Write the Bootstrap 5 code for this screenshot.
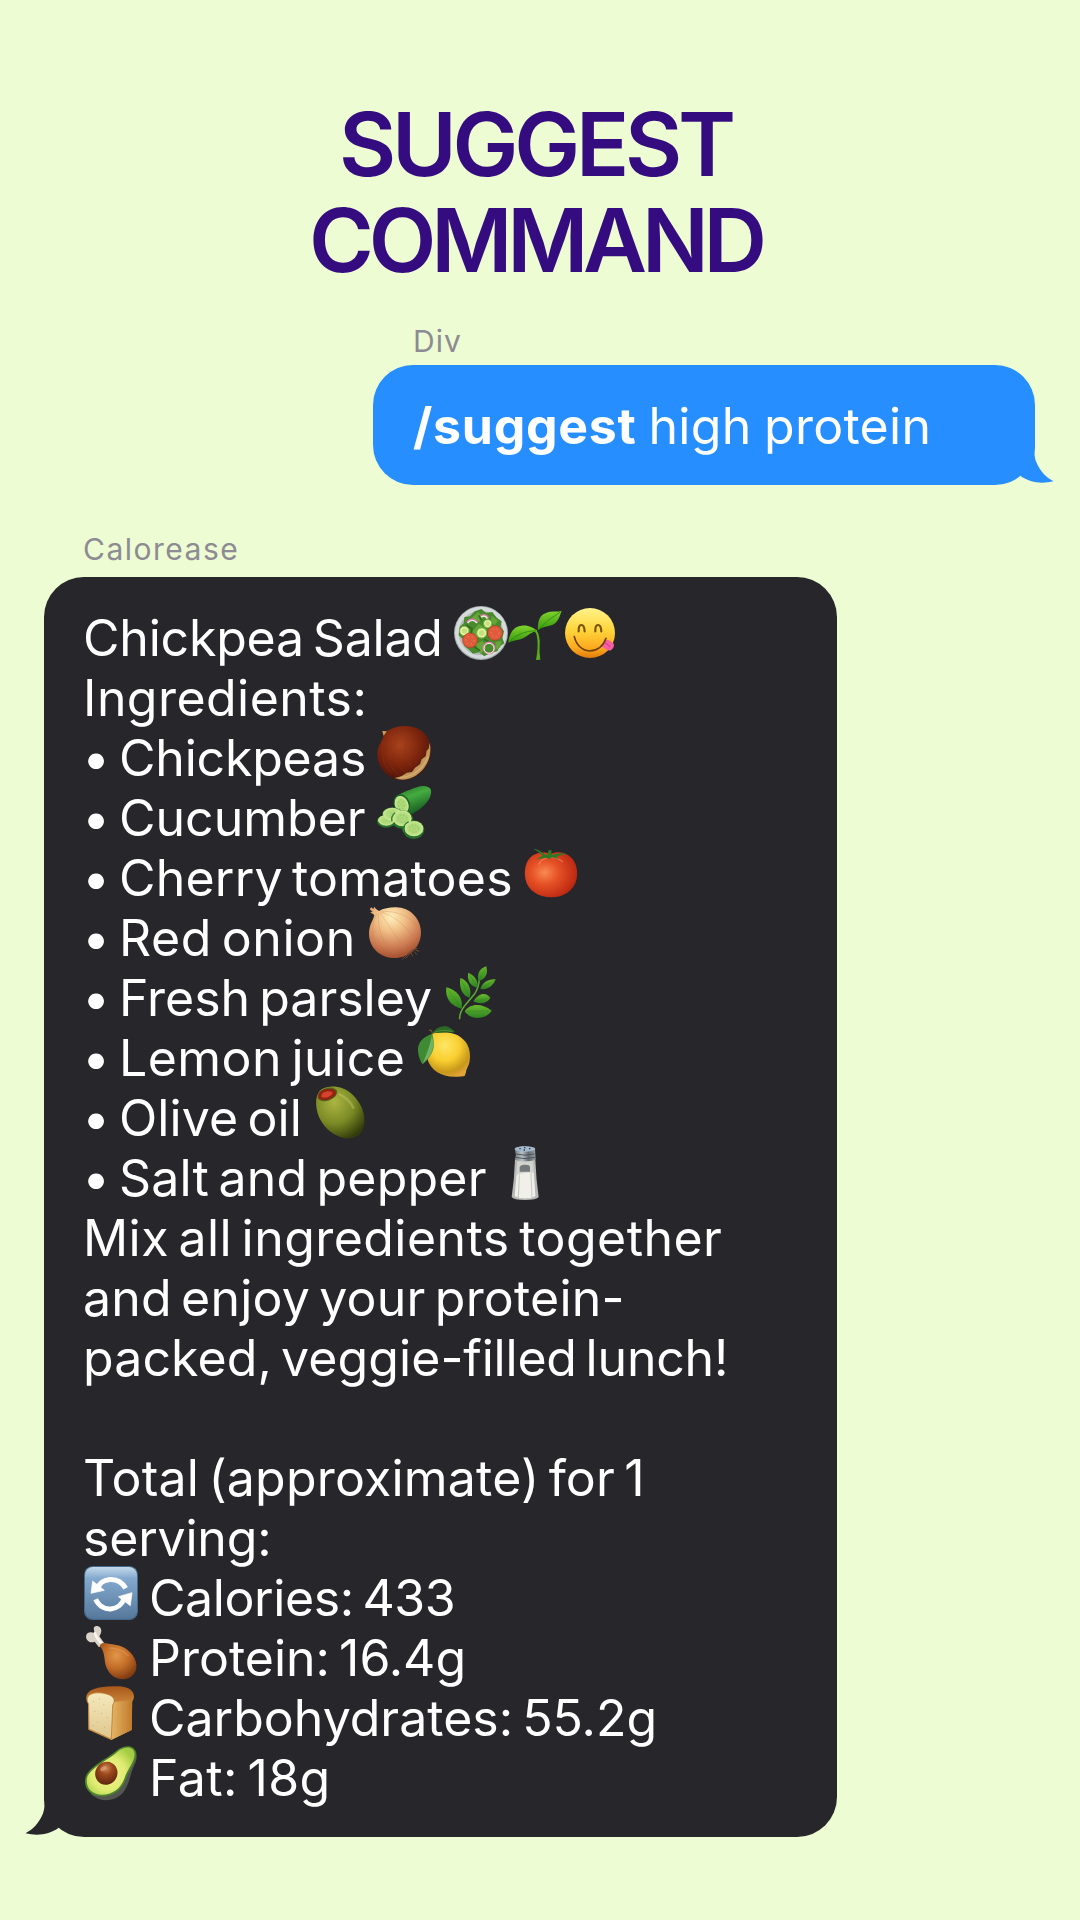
<!DOCTYPE html>
<html lang="en">
<head>
    <meta charset="UTF-8">
    <meta name="viewport" content="width=device-width, initial-scale=1.0">
    <link href="https://cdn.jsdelivr.net/npm/bootstrap@5.3.3/dist/css/bootstrap.min.css" rel="stylesheet">
    <title>Suggest command</title>
    <style>
        body {
            background-color: #edfcd2;
            font-family: Inter, "Liberation Sans", sans-serif;
            min-height: 1920px;
            overflow-x: hidden;
        }
        .page-title {
            color: #350c80;
            font-size: 88px;
            font-weight: 600;
            line-height: 96px;
            padding: 96px 9px 0 0;
        }
        .title-top { letter-spacing: -4.2px; }
        .title-bottom { letter-spacing: -5.2px; }

        .sender {
            color: #8d8b93;
            font-size: 30px;
            line-height: 36px;
            letter-spacing: 1.5px;
        }
        .bubble {
            border-radius: 40px;
            color: #fff;
            font-size: 50px;
            line-height: 60px;
        }
        .mine { width: 662px; margin-left: 373px; margin-top: 35px; }
        .mine .sender { padding-left: 40px; letter-spacing: 1px; }
        .mine .bubble {
            background-color: #268eff;
            height: 120px;
            margin-top: 6px;
            padding: 31px 40px 29px;
        }
        .mine b { letter-spacing: .7px; }
        .mine .phrase { letter-spacing: .3px; margin-left: -2px; word-spacing: -2px; }
        .bot { width: 793px; margin-left: 44px; margin-top: 46px; }
        .bot .sender { padding-left: 39px; }
        .bot .bubble {
            background-color: #27262b;
            height: 1260px;
            margin-top: 10px;
            padding: 31px 40px 29px;
        }
        .tail { width: 50px; height: 45px; bottom: 0; }
        .mine .tail { right: -20px; fill: #268eff; }
        .bot .tail { left: -20px; fill: #27262b; }

        .msg-line {
            display: flex;
            height: 60px;
            margin-left: -1px;
            white-space: pre;
            word-spacing: -5px;
        }
        .msg-line .emoji {
            flex: none;
            width: 54px;
            height: 54px;
            margin: -2px 0 0 11px;
            overflow: visible;
        }
        .msg-line .emoji + .emoji { margin-left: .5px; }
        .msg-line .emoji:first-child { margin-left: 1px; }
        .msg-line .emoji + span { margin-left: 11px; }
        .dot { width: 37px; margin-left: -1px; }

        .ls-n4 { letter-spacing: -.4px; }
        .ls-n2 { letter-spacing: -.2px; }
        .ls-1 { letter-spacing: .1px; }
        .ls-2 { letter-spacing: .2px; }
        .ls-4 { letter-spacing: .45px; }
        .ls-6 { letter-spacing: .6px; }
    </style>
</head>
<body>
    <!-- gradients shared by the emoji -->
    <svg width="0" height="0" class="position-absolute" aria-hidden="true">
        <defs>
            <linearGradient id="gFace" x1="0" y1="0" x2="0" y2="1"><stop offset="0" stop-color="#fff38a"/><stop offset=".45" stop-color="#ffd43a"/><stop offset=".8" stop-color="#fda91f"/><stop offset="1" stop-color="#e27b0c"/></linearGradient>
            <linearGradient id="gLeaf" x1="0" y1="0" x2="0" y2="1"><stop offset="0" stop-color="#7fd32c"/><stop offset="1" stop-color="#35960f"/></linearGradient>
            <linearGradient id="gHerb" x1="0" y1="0" x2="0" y2="1"><stop offset="0" stop-color="#68ba2a"/><stop offset="1" stop-color="#2d8224"/></linearGradient>
            <radialGradient id="gNut" cx=".42" cy=".35" r=".65"><stop offset="0" stop-color="#a8431d"/><stop offset=".6" stop-color="#7b240c"/><stop offset="1" stop-color="#4c150b"/></radialGradient>
            <linearGradient id="gCuke" x1=".3" y1="0" x2=".8" y2="1"><stop offset="0" stop-color="#257b2e"/><stop offset=".35" stop-color="#46ac3f"/><stop offset="1" stop-color="#0d4a1b"/></linearGradient>
            <radialGradient id="gSlice"><stop offset="0" stop-color="#a6d673"/><stop offset=".65" stop-color="#b4dc80"/><stop offset="1" stop-color="#d0ea94"/></radialGradient>
            <radialGradient id="gTomato" cx=".38" cy=".45" r=".65"><stop offset="0" stop-color="#f98a51"/><stop offset=".4" stop-color="#e65226"/><stop offset="1" stop-color="#b82310"/></radialGradient>
            <radialGradient id="gOnion" cx=".42" cy=".2" r=".85"><stop offset="0" stop-color="#fff0bd"/><stop offset=".35" stop-color="#efbc84"/><stop offset=".7" stop-color="#cc7b52"/><stop offset="1" stop-color="#9b4529"/></radialGradient>
            <radialGradient id="gLemon" cx=".42" cy=".3" r=".75"><stop offset="0" stop-color="#ffe665"/><stop offset=".45" stop-color="#f9cf31"/><stop offset=".8" stop-color="#c7981a"/><stop offset="1" stop-color="#e3a43c"/></radialGradient>
            <radialGradient id="gOlive" cx=".38" cy=".3" r=".75"><stop offset="0" stop-color="#abb542"/><stop offset=".55" stop-color="#7b8a25"/><stop offset="1" stop-color="#333d0b"/></radialGradient>
            <linearGradient id="gCap"><stop offset="0" stop-color="#747b81"/><stop offset=".35" stop-color="#b9c2c7"/><stop offset=".65" stop-color="#646b70"/><stop offset="1" stop-color="#969da1"/></linearGradient>
            <linearGradient id="gBlue" x1="0" y1="0" x2="0" y2="1"><stop offset="0" stop-color="#c5d9ea"/><stop offset=".22" stop-color="#83a9ce"/><stop offset=".6" stop-color="#6d92b6"/><stop offset="1" stop-color="#57789b"/></linearGradient>
            <radialGradient id="gLeg" cx=".45" cy=".35" r=".7"><stop offset="0" stop-color="#e2974a"/><stop offset=".5" stop-color="#c26c27"/><stop offset="1" stop-color="#7b370f"/></radialGradient>
            <linearGradient id="gCrust" x1="0" y1="0" x2="0" y2="1"><stop offset="0" stop-color="#a7571b"/><stop offset=".35" stop-color="#ce8a3d"/><stop offset="1" stop-color="#d79a45"/></linearGradient>
            <linearGradient id="gCrustSide"><stop offset="0" stop-color="#e5b566"/><stop offset="1" stop-color="#c07a2c"/></linearGradient>
            <linearGradient id="gCrumb" x1="0" y1="0" x2="0" y2="1"><stop offset="0" stop-color="#f5e9bd"/><stop offset="1" stop-color="#dfc68d"/></linearGradient>
            <radialGradient id="gAvo" cx=".45" cy=".55" r=".6"><stop offset="0" stop-color="#f4f28b"/><stop offset=".6" stop-color="#dfec72"/><stop offset="1" stop-color="#a5cd43"/></radialGradient>
            <radialGradient id="gPit" cx=".38" cy=".32" r=".7"><stop offset="0" stop-color="#d08a59"/><stop offset=".4" stop-color="#9c481c"/><stop offset="1" stop-color="#5e260f"/></radialGradient>
        </defs>
    </svg>

    <h1 class="page-title text-center m-0">
        <span class="title-top d-block">SUGGEST</span>
        <span class="title-bottom d-block">COMMAND</span>
    </h1>

    <div class="mine">
        <div class="sender">Div</div>
        <div class="bubble position-relative text-nowrap">
            <b>/suggest</b> <span class="phrase">high protein</span>
            <svg class="tail position-absolute" viewBox="0 0 50 45"><path d="M30 0V7C29 12 29.5 17 31 21.5C35 31.5 42 38 48.5 41.2C37.5 44 25 43 15.3 35.8L5 10Z"/></svg>
        </div>
    </div>

    <div class="bot">
        <div class="sender">Calorease</div>
        <div class="bubble position-relative">
            <div class="msg-line"><span class="ls-n2">Chickpea Salad</span>
                <!-- salad --><svg class="emoji" viewBox="0 0 162 162">
                    <circle cx="81" cy="81" r="81" fill="#a5acae"/><circle cx="81" cy="80" r="78" fill="#d5dadb"/><circle cx="81" cy="81" r="67" fill="#b3bcbb"/>
                    <path d="M62 16L82 9L96 20L115 18L128 35L143 46L140 62L150 76L145 96L151 112L137 122L130 136L108 141L91 151L76 139L57 143L43 130L31 120L27 100L14 88L17 62L29 52L31 33L48 31Z" fill="#4a8a2e"/>
                    <path d="M52 36L72 18L91 34L76 48ZM55 76L75 53L98 70L87 98L66 94ZM113 29L132 44L122 58L111 48ZM65 114L86 104L96 126L80 145ZM124 108L143 105L139 124L127 131Z" fill="#66a53a"/>
                    <path d="M36 57L54 68L51 82M90 100L108 109M74 28L83 44M100 77L107 96M60 122L78 134" fill="none" stroke="#336b20" stroke-width="5"/>
                    <path d="M39 49Q53 30 71 49M80 30Q96 21 103 37" fill="none" stroke="#d778a0" stroke-width="6"/><path d="M41 51Q54 35 69 51M81 33Q94 26 100 38" fill="none" stroke="#fbeef0" stroke-width="4"/>
                    <g fill="#e9f5ae" stroke="#79b63e" stroke-width="3"><circle cx="31" cy="75" r="14"/><circle cx="83" cy="81" r="15"/><circle cx="101" cy="53" r="12"/></g><g fill="#c2e17b"><circle cx="31" cy="75" r="8"/><circle cx="83" cy="81" r="9"/><circle cx="101" cy="53" r="7"/></g>
                    <g fill="#e05a3c" stroke="#c03a25" stroke-width="2"><circle cx="48" cy="103" r="22"/><circle cx="123" cy="81" r="22"/></g>
                    <g fill="none" stroke="#f08a60" stroke-width="3" stroke-dasharray="4 8"><circle cx="48" cy="103" r="12"/><circle cx="123" cy="81" r="12"/></g>
                    <circle cx="105" cy="126" r="17" fill="none" stroke="#d979a2" stroke-width="5"/><circle cx="105" cy="127" r="15" fill="none" stroke="#f3f7e6" stroke-width="3"/>
                </svg><!-- seedling --><svg class="emoji" viewBox="0 0 162 162">
                    <path d="M84 70Q97 88 95 118Q93 140 97 161L84 162Q91 128 88 99Q87 85 80 75Z" fill="#57ad1b"/>
                    <path d="M0 110C5 80 17 61 41 59C62 57 78 66 88 75C70 77 61 89 47 96C32 103 15 103 0 110Z" fill="url(#gLeaf)"/>
                    <path d="M90 73C88 46 95 26 116 20C131 14 148 19 161 15C154 32 151 49 134 56C117 62 101 62 90 73Z" fill="url(#gLeaf)"/>
                    <path d="M3 108Q35 75 84 74M92 70Q119 40 157 18" fill="none" stroke="#2f8710" stroke-width="2.5"/>
                </svg><!-- savouring face --><svg class="emoji" viewBox="0 0 162 162">
                    <circle cx="81" cy="81" r="75" fill="url(#gFace)"/>
                    <path d="M47 76Q46 57 55 57T65 76M97 76Q96 57 105 57T115 76" fill="none" stroke="#795109" stroke-width="6.5" stroke-linecap="round"/>
                    <path d="M112 119L131 101Q142 102 153 115Q153 130 140 134Q128 130 112 119Z" fill="#f85ea2"/><path d="M125 109L141 122" stroke="#c9397e" stroke-width="3"/>
                    <path d="M34 92Q44 132 80 135Q117 133 129 97" fill="none" stroke="#6d4007" stroke-width="5" stroke-linecap="round"/>
                </svg></div>
            <div class="msg-line"><span class="ls-4">Ingredients:</span></div>
            <div class="msg-line"><span class="dot">•</span><span class="ls-n2">Chickpeas</span>
                <!-- chestnut --><svg class="emoji" viewBox="0 0 162 162">
                    <path d="M16 15L28 16C46 5 65 0 84 0C127 -1 162 27 162 73C162 121 124 163 74 162C35 162 0 127 1 83C2 59 15 45 19 32Z" fill="url(#gNut)"/>
                    <path d="M23 45C9 72 15 115 43 142M41 34C23 72 31 124 67 148M67 17C44 63 51 119 87 140M101 15C77 58 80 99 108 124" fill="none" stroke="#982f13" stroke-opacity=".45" stroke-width="3"/>
                    <path d="M158 50C167 91 147 139 100 157Q76 166 53 156L73 151L90 140L105 138L114 125L129 115L134 100L146 91L149 74L155 68Z" fill="#c2985a"/><path d="M69 155Q128 151 154 91" fill="none" stroke="#d2b074" stroke-width="4"/>
                    <path d="M16 15L29 16L20 29Z" fill="#c7a362"/>
                </svg></div>
            <div class="msg-line"><span class="dot">•</span><span>Cucumber</span>
                <!-- cucumber --><svg class="emoji" viewBox="0 0 162 162">
                    <path d="M51 42C60 23 91 14 122 3C137 -3 158 1 162 12C166 43 134 68 106 84L92 80Z" fill="url(#gCuke)"/>
                    <ellipse cx="75" cy="55" rx="24" ry="31" transform="rotate(-22 75 55)" fill="#1c6a28"/><ellipse cx="74" cy="56" rx="20" ry="27" transform="rotate(-22 74 56)" fill="url(#gSlice)"/>
                    <g fill="#25712b"><ellipse cx="28" cy="106" rx="28" ry="19"/><ellipse cx="46" cy="87" rx="31" ry="23"/><ellipse cx="75" cy="100" rx="33" ry="28"/><ellipse cx="110" cy="131" rx="32" ry="28"/></g>
                    <g fill="url(#gSlice)"><ellipse cx="28" cy="103" rx="25" ry="16"/><ellipse cx="46" cy="84" rx="28" ry="19"/><ellipse cx="76" cy="97" rx="28" ry="24"/><ellipse cx="111" cy="128" rx="28" ry="23"/></g>
                    <g fill="none" stroke="#8fc963" stroke-width="3" stroke-dasharray="5 5"><ellipse cx="73" cy="56" rx="9" ry="14"/><ellipse cx="76" cy="98" rx="14" ry="11"/><ellipse cx="111" cy="128" rx="14" ry="11"/></g>
                    <path d="M45 106A33 28 0 0 1 54 80M79 137A32 28 0 0 1 95 107" fill="none" stroke="#2f8133" stroke-width="4"/>
                </svg></div>
            <div class="msg-line"><span class="dot">•</span><span class="ls-2">Cherry tomatoes</span>
                <!-- tomato --><svg class="emoji" viewBox="0 0 162 162">
                    <path d="M81 24C98 14 126 18 142 35C158 50 162 77 158 98C151 133 119 154 82 154C43 154 10 132 4 98C-1 67 8 33 35 24C53 17 68 20 81 24Z" fill="url(#gTomato)"/>
                    <path d="M73 34Q52 38 43 56M81 34Q106 36 116 48" fill="none" stroke="#f58f63" stroke-opacity=".6" stroke-width="4"/>
                    <path d="M28 9Q43 9 57 22L70 28L74 13L82 12L83 27Q110 17 131 25Q111 25 96 34L107 40L84 34L74 39L68 35Q48 37 35 41L55 29Q45 16 28 9Z" fill="#2f7926"/>
                </svg></div>
            <div class="msg-line"><span class="dot">•</span><span class="ls-6">Red onion</span>
                <!-- onion --><svg class="emoji" viewBox="0 0 162 162">
                    <path d="M13 4L19 9L22 2L27 9L36 15C49 8 66 4 84 4C127 2 162 37 162 80C162 122 128 156 82 156C37 156 6 122 6 83C6 57 19 43 22 27L9 18L17 17L8 10Z" fill="url(#gOnion)"/>
                    <path d="M30 23C7 61 15 113 49 139M34 21C31 72 49 121 86 147M38 20C59 49 91 99 121 135M41 18C81 30 119 57 146 106M43 17C89 13 130 31 151 62" fill="none" stroke="#c97744" stroke-opacity=".3" stroke-width="2.5"/>
                    <path d="M151 127L133 134L105 161M139 132L116 157M141 136L150 146M145 132L157 136M132 139L137 151" fill="none" stroke="#6c4a31" stroke-width="3"/>
                </svg></div>
            <div class="msg-line"><span class="dot">•</span><span>Fresh parsley</span>
                <!-- herb --><svg class="emoji" viewBox="0 0 162 162">
                    <path d="M50 160Q49 139 65 119L94 85Q108 64 109 38" fill="none" stroke="#5eac31" stroke-width="4.5"/>
                    <g fill="url(#gHerb)"><path d="M10 64C42 72 61 95 56 128C26 122 5 99 10 64Z"/><path d="M52 36C74 42 88 69 80 95C60 91 47 67 52 36Z"/><path d="M76 20C96 29 109 48 102 65C80 58 71 42 76 20Z"/><path d="M130 1C136 23 128 40 107 46C101 24 109 7 130 1Z"/><path d="M158 40C149 61 135 72 112 69C119 46 137 40 158 40Z"/><path d="M142 96C129 116 108 114 91 106C105 83 129 76 142 96Z"/><path d="M146 134C127 162 82 163 65 136C81 112 116 111 146 134Z"/></g>
                    <path d="M13 67L54 124M54 40L79 91M79 24L101 62M129 5L108 43M155 42L114 67M138 96L96 105M140 135L70 136" stroke="#2b761e" stroke-opacity=".55" stroke-width="2"/>
                </svg></div>
            <div class="msg-line"><span class="dot">•</span><span class="ls-4">Lemon juice</span>
                <!-- lemon --><svg class="emoji" viewBox="0 0 162 162">
                    <path d="M49 22C73 17 112 15 136 35C158 51 165 78 161 103C160 119 150 130 150 139L146 150Q131 153 116 152C75 152 43 132 34 98C28 70 40 46 49 22Z" fill="url(#gLemon)"/>
                    <path d="M50 22C58 7 75 -3 96 2Q110 8 118 19Q88 19 50 22Z" fill="#2c6826"/><path d="M55 20Q80 7 108 17" fill="none" stroke="#508c37" stroke-width="3"/>
                    <path d="M49 23C22 32 4 49 6 75Q8 100 20 115C38 99 57 74 53 50Q52 34 49 23Z" fill="#3e8b34"/><path d="M48 27C40 65 32 83 21 111Q48 91 53 57Z" fill="#72b264"/>
                    <path d="M50 23L46 14L39 12" fill="none" stroke="#625332" stroke-width="4"/>
                </svg></div>
            <div class="msg-line"><span class="dot">•</span><span class="ls-1">Olive oil</span>
                <!-- olive --><svg class="emoji" viewBox="0 0 162 162">
                    <path d="M27 9C49 -4 91 -2 119 26C145 52 158 83 154 112C151 142 131 158 104 158C65 155 26 123 14 82C6 53 7 21 27 9Z" fill="url(#gOlive)"/>
                    <ellipse cx="43" cy="25" rx="31" ry="19" transform="rotate(-20 43 25)" fill="#56651b"/><path d="M17 35C12 18 30 8 50 8C68 8 74 20 65 29C53 43 22 48 17 35Z" fill="#8f2413"/><path d="M25 33C24 18 46 12 59 19C58 31 38 39 25 33Z" fill="#d5432a"/>
                    <path d="M80 25Q108 39 121 65" fill="none" stroke="#d3d57b" stroke-opacity=".35" stroke-width="7" stroke-linecap="round"/>
                </svg></div>
            <div class="msg-line"><span class="dot">•</span><span class="ls-2">Salt and pepper</span>
                <!-- salt --><svg class="emoji" viewBox="0 0 162 162">
                    <path d="M51 41H112Q114 98 122 153Q116 162 81 162T41 153Q49 100 51 41Z" fill="#b6b8b6"/>
                    <path d="M58 46H105L108 83L112 151Q81 162 51 151L55 83Z" fill="#d2d3cf"/>
                    <path d="M65 77V63Q69 55 81 56Q94 55 96 63V77Z" fill="#74787a"/>
                    <path d="M56 88Q76 77 107 80L112 150L99 157H64L50 150Z" fill="#f1efe9"/><path d="M64 86L61 157M99 81L102 157" stroke="#c9c8c3" stroke-width="3"/>
                    <path d="M50 8Q80 -6 111 8L113 41Q82 51 50 41L54 27Z" fill="url(#gCap)"/><ellipse cx="81" cy="9" rx="31" ry="8" fill="#a2b9cb"/><path d="M64 8H68M78 5H82M93 8H97M77 12H81" stroke="#283644" stroke-width="4"/>
                    <path d="M53 24Q81 31 109 24M52 34Q81 42 111 34" fill="none" stroke="#4f565b" stroke-width="3"/>
                </svg></div>
            <div class="msg-line"><span class="ls-4">Mix all ingredients together</span></div>
            <div class="msg-line"><span class="ls-2">and enjoy your protein-</span></div>
            <div class="msg-line"><span class="ls-1">packed, veggie</span><span class="ls-n2">-filled lunch!</span></div>
            <div class="msg-line"></div>
            <div class="msg-line"><span class="ls-2">Total (approximate) for 1</span></div>
            <div class="msg-line"><span class="ls-n2">serving:</span></div>
            <div class="msg-line"><!-- refresh --><svg class="emoji" viewBox="0 0 162 162">
                    <rect width="162" height="162" rx="26" fill="#456a8e"/><rect x="3" y="3" width="156" height="155" rx="24" fill="url(#gBlue)"/>
                    <path d="M41 68C50 35 103 28 125 67M121 96C108 136 54 142 35 100" fill="none" stroke="#fff" stroke-width="15"/>
                    <path d="M26 45L21 82L61 73ZM144 80L103 92L139 119Z" fill="#fff" stroke="#fff" stroke-width="2" stroke-linejoin="round"/>
                </svg><span class="ls-n4">Calories: 433</span></div>
            <div class="msg-line"><!-- drumstick --><svg class="emoji" viewBox="0 0 162 162">
                    <path d="M30 11C25 -2 47 -5 51 9Q54 19 46 31L62 53L45 64L32 47C20 53 7 45 6 32C6 20 19 16 31 21Z" fill="#d9d3c8"/><path d="M33 22Q36 34 53 53" fill="none" stroke="#faf6ed" stroke-width="8" stroke-linecap="round"/>
                    <path d="M47 60Q51 49 62 51C82 57 119 52 145 86C165 113 161 144 133 157C103 166 78 151 67 124C59 103 65 79 47 60Z" fill="url(#gLeg)"/>
                    <path d="M78 66Q111 68 132 88" fill="none" stroke="#f2ad61" stroke-opacity=".35" stroke-width="5" stroke-linecap="round"/>
                </svg><span>Protein: 16.4g</span></div>
            <div class="msg-line"><!-- bread --><svg class="emoji" viewBox="0 0 162 162">
                    <path d="M7 41C3 18 25 8 51 4Q78 -1 104 1C132 2 152 14 150 34Q149 42 144 47L143 132L82 162L13 131L12 53Z" fill="url(#gCrust)"/>
                    <path d="M88 48L145 43L143 132L82 161Z" fill="url(#gCrustSide)"/>
                    <path d="M10 37C14 20 43 17 67 24C89 29 96 43 86 57L82 159L15 129L14 54Q7 46 10 37Z" fill="url(#gCrumb)" stroke="#b77431" stroke-width="2"/>
                    <path d="M27 47H30M45 39H48M58 56H61M31 76H34M51 82H54M68 96H71M39 108H42M60 124H63M26 119H29" stroke="#ccb27b" stroke-width="3"/>
                </svg><span>Carbohydrates: 55.2g</span></div>
            <div class="msg-line"><!-- avocado --><svg class="emoji" viewBox="0 0 162 162">
                    <path d="M146 5C161 13 162 37 151 58C139 82 139 105 123 131C107 160 67 170 39 157L20 145Z" fill="#535650"/>
                    <path d="M103 10C124 -4 149 -3 155 17C161 45 137 68 127 97C114 133 87 153 49 151C17 149 -2 125 4 96C12 62 70 39 103 10Z" fill="#4d842c"/>
                    <path d="M106 13C125 1 146 1 151 19C156 44 132 66 122 95C110 130 84 147 50 146C21 144 4 122 9 97C16 66 74 43 106 13Z" fill="url(#gAvo)"/>
                    <ellipse cx="67" cy="82" rx="33" ry="35" transform="rotate(30 67 82)" fill="url(#gPit)"/><ellipse cx="58" cy="68" rx="10" ry="6" transform="rotate(-30 58 68)" fill="#e4ae83" fill-opacity=".6"/>
                </svg><span class="ls-4">Fat: 18g</span></div>
            <svg class="tail position-absolute" viewBox="0 0 50 45"><path transform="translate(50 0) scale(-1 1)" d="M30 0V7C29 12 29.5 17 31 21.5C35 31.5 42 38 48.5 41.2C37.5 44 25 43 15.3 35.8L5 10Z"/></svg>
        </div>
    </div>

    <script src="https://cdn.jsdelivr.net/npm/bootstrap@5.3.3/dist/js/bootstrap.bundle.min.js"></script>
</body>
</html>
